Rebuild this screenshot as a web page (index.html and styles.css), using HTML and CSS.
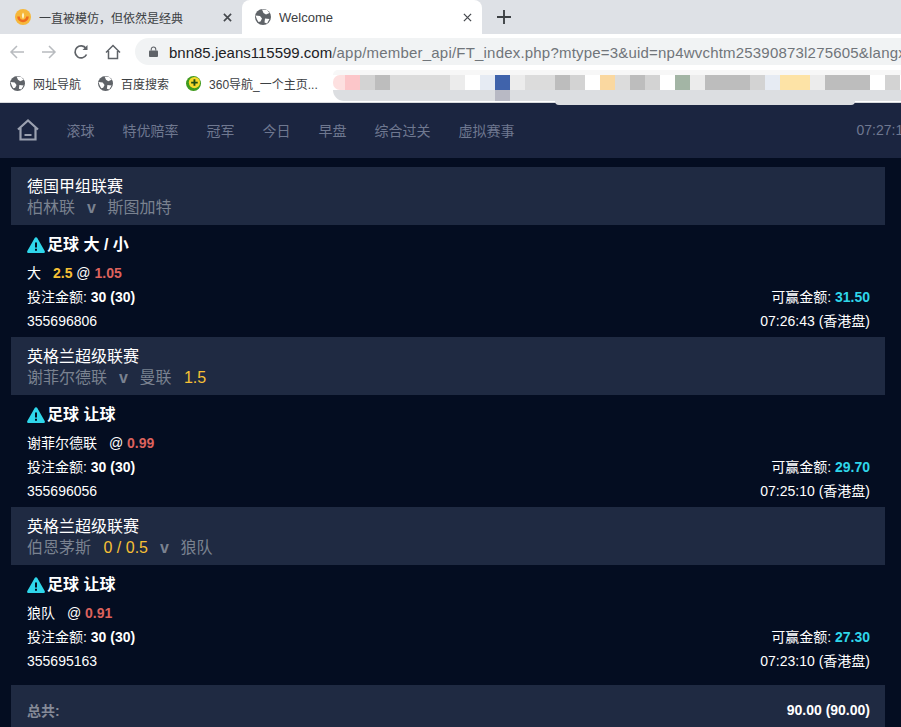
FILE: index.html
```html
<!DOCTYPE html>
<html lang="zh">
<head>
<meta charset="utf-8">
<title>Welcome</title>
<link rel="stylesheet" href="styles.css">
</head>
<body>
<div class="chrome">
  <div class="tabstrip">
    <div class="tab">
      <svg class="fav" viewBox="0 0 16 16"><circle cx="8" cy="8" r="8" fill="#f6b73a"/><path d="M3.500 7.500a4.500 4.500 0 0 0 9 0" fill="none" stroke="#ee6a1f" stroke-width="2.600"/><path d="M8 3.500c-1.500 2-1.500 4 0 6.500 1.500-2.500 1.500-4.500 0-6.500z" fill="#fff3c4"/></svg>
      <span class="tab-title">一直被模仿，但依然是经典</span>
      <svg class="close" viewBox="0 0 10 10"><path d="M1 1l8 8M9 1l-8 8" stroke="#45484d" stroke-width="1.800"/></svg>
    </div>
    <div class="tab tab-active">
      <svg class="fav" viewBox="0 0 16 16"><use href="#globe"/></svg>
      <span class="tab-title tab-title-latin">Welcome</span>
      <svg class="close" viewBox="0 0 10 10"><path d="M1 1l8 8M9 1l-8 8" stroke="#45484d" stroke-width="1.400"/></svg>
    </div>
    <svg class="newtab" viewBox="0 0 12 12"><path d="M6 0v12M0 6h12" stroke="#3c4043" stroke-width="1.600"/></svg>
  </div>
  <div class="toolbar">
    <svg class="tool" viewBox="0 0 16 16"><path d="M15 8H2M8 2L2 8l6 6" fill="none" stroke="#b8bbbf" stroke-width="1.500"/></svg>
    <svg class="tool" viewBox="0 0 16 16"><path d="M1 8h13M8 2l6 6-6 6" fill="none" stroke="#b8bbbf" stroke-width="1.500"/></svg>
    <svg class="tool" viewBox="0 0 16 16"><path d="M13.500 10.500A6 6 0 1 1 13 4.500" fill="none" stroke="#5f6368" stroke-width="1.700"/><path d="M14.500 1v5h-5z" fill="#5f6368"/></svg>
    <svg class="tool" viewBox="0 0 16 16"><path d="M1 8.500L8 1.500l7 7M3.500 7v7.500h9V7" fill="none" stroke="#5f6368" stroke-width="1.500"/></svg>
    <div class="address">
      <svg class="lock" viewBox="0 0 10 12"><path d="M2.500 5V3.500a2.500 2.500 0 0 1 5 0V5" fill="none" stroke="#5f6368" stroke-width="1.200"/><rect y="5" width="10" height="7" rx="1" fill="#5f6368"/></svg>
      <span class="url"><span class="host">bnn85.jeans115599.com</span><span class="path">/app/member_api/FT_index.php?mtype=3&amp;uid=np4wvchtm25390873l275605&amp;langx=zh-cn</span></span>
    </div>
  </div>
  <div class="bookmarks">
    <span class="mark"><svg class="mark-icon" viewBox="0 0 16 16"><use href="#globe"/></svg>网址导航</span>
    <span class="mark"><svg class="mark-icon" viewBox="0 0 16 16"><use href="#globe"/></svg>百度搜索</span>
    <span class="mark"><svg class="mark-icon" viewBox="0 0 16 16"><circle cx="8" cy="8" r="8" fill="#3f9a1e"/><circle cx="9" cy="7" r="6" fill="#f6d92c"/><path d="M9 3.500v7M5.500 7h7" stroke="#1f4d14" stroke-width="2"/></svg>360导航_一个主页...</span>
  </div>
  <div class="mosaic">
    <div class="mosaic-top"></div>
    <div class="mosaic-row">
      <i class="m first"></i><i class="m p"></i><i class="m c"></i><i class="m b"></i><i class="m d"></i><i class="m d"></i><i class="m d"></i><i class="m d"></i><i class="m a"></i><i class="m w"></i><i class="m e"></i><i class="m blue"></i><i class="m a"></i><i class="m d"></i><i class="m d"></i><i class="m b"></i><i class="m c"></i><i class="m w"></i><i class="m orange"></i><i class="m d"></i><i class="m b"></i><i class="m c"></i><i class="m w"></i><i class="m green"></i><i class="m a"></i><i class="m b"></i><i class="m b"></i><i class="m b"></i><i class="m c"></i><i class="m e"></i><i class="m yellow"></i><i class="m yellow"></i><i class="m a"></i><i class="m b"></i><i class="m b"></i><i class="m b"></i><i class="m w"></i><i class="m c"></i>
    </div>
    <div class="mosaic-low">
      <i class="low low-a"></i><i class="low low-blue"></i><i class="low low-a2"></i><i class="low low-b"></i><i class="low low-c"></i>
    </div>
  </div>
</div>

<nav class="topnav">
  <svg class="home" viewBox="0 0 22 22"><path d="M1 10.500L11 1.500l10 9M3.500 9v11.500h15V9M7.500 16h7" fill="none" stroke="#9ba1b0" stroke-width="2.200"/></svg>
  <a class="nav-link">滚球</a>
  <a class="nav-link">特优赔率</a>
  <a class="nav-link">冠军</a>
  <a class="nav-link">今日</a>
  <a class="nav-link">早盘</a>
  <a class="nav-link">综合过关</a>
  <a class="nav-link">虚拟赛事</a>
  <span class="clock">07:27:14</span>
</nav>

<main class="list">
  <section class="bet">
    <header class="league">
      <div class="league-name">德国甲组联赛</div>
      <div class="teams">柏林联<span class="vs">v</span>斯图加特</div>
    </header>
    <div class="detail">
      <h3 class="market"><svg class="warn" viewBox="0 0 18 16"><use href="#warning"/></svg>足球 大 / 小</h3>
      <div class="row"><span>大<b class="line">2.5</b> @ <b class="odds">1.05</b></span></div>
      <div class="row"><span>投注金额: <b>30 (30)</b></span><span>可赢金额: <b class="win">31.50</b></span></div>
      <div class="row"><span>355696806</span><span>07:26:43 (香港盘)</span></div>
    </div>
  </section>
  <section class="bet">
    <header class="league">
      <div class="league-name">英格兰超级联赛</div>
      <div class="teams">谢菲尔德联<span class="vs">v</span>曼联<span class="hcp">1.5</span></div>
    </header>
    <div class="detail">
      <h3 class="market"><svg class="warn" viewBox="0 0 18 16"><use href="#warning"/></svg>足球 让球</h3>
      <div class="row"><span>谢菲尔德联 <span class="at">@</span> <b class="odds">0.99</b></span></div>
      <div class="row"><span>投注金额: <b>30 (30)</b></span><span>可赢金额: <b class="win">29.70</b></span></div>
      <div class="row"><span>355696056</span><span>07:25:10 (香港盘)</span></div>
    </div>
  </section>
  <section class="bet">
    <header class="league">
      <div class="league-name">英格兰超级联赛</div>
      <div class="teams">伯恩茅斯<span class="hcp">0 / 0.5</span><span class="vs">v</span>狼队</div>
    </header>
    <div class="detail">
      <h3 class="market"><svg class="warn" viewBox="0 0 18 16"><use href="#warning"/></svg>足球 让球</h3>
      <div class="row"><span>狼队 <span class="at">@</span> <b class="odds">0.91</b></span></div>
      <div class="row"><span>投注金额: <b>30 (30)</b></span><span>可赢金额: <b class="win">27.30</b></span></div>
      <div class="row"><span>355695163</span><span>07:23:10 (香港盘)</span></div>
    </div>
  </section>
  <footer class="total"><b class="total-label">总共:</b><b>90.00 (90.00)</b></footer>
</main>

<svg class="defs" aria-hidden="true">
  <symbol id="globe" viewBox="0 0 16 16"><circle cx="8" cy="8" r="8" fill="#5f6368"/><path d="M0.500 6.500L5 7l2 2.500-1.500 3-2 .5-1.500-2.500zM7 0.500l5 .5 2.500 3L11 5.500 8.500 4zM10 9.500l4.500 .5-2.500 4.500-2.500-1z" fill="#fff"/></symbol>
  <symbol id="warning" viewBox="0 0 18 16"><path fill-rule="evenodd" d="M9 0.300c.6 0 1 .3 1.300 .8l7.400 12.900c.5 .9-.1 2-1.200 2H1.500C.4 16-.2 14.900 .3 14L7.700 1.100C8 .6 8.400 .3 9 .3zM8 5.500v5h2v-5zM8 11.800v2h2v-2z" fill="#2fd6ea"/></symbol>
</svg>
</body>
</html>
```
FILE: styles.css
```css
html, body { margin: 0; height: 727px; overflow: hidden; background: #040d21; }
body { font-family: "Liberation Sans", "Noto Sans CJK SC", sans-serif; font-size: 14px; color: #fff; position: relative; }

.chrome { background: #fff; color: #3c4043; }
.tabstrip { height: 34px; background: #dee1e6; display: flex; align-items: stretch; }
.tab { width: 242px; box-sizing: border-box; display: flex; align-items: center; padding: 0 10px 0 15px; font-size: 12px; }
.tab-active { background: #fff; border-radius: 8px 8px 0 0; width: 240px; padding-left: 13px; }
.fav { width: 16px; height: 16px; flex: none; margin-right: 8px; }
.tab-title { flex: 1; white-space: nowrap; overflow: hidden; }
.tab-title-latin { font-size: 13px; }
.close { width: 9px; height: 9px; flex: none; }
.newtab { width: 14px; height: 14px; margin: 10px 0 0 15px; }

.toolbar { height: 31px; display: flex; align-items: center; padding-left: 9px; }
.tool { width: 16px; height: 16px; margin: 4px 16px 0 0; flex: none; }
.toolbar .tool:nth-child(4) { margin-right: 14px; }
.address { flex: 1; min-width: 0; height: 27px; margin-top: 4px; border-radius: 14px 0 0 14px; background: #f1f3f4; display: flex; align-items: center; padding-left: 14px; overflow: hidden; }
.lock { width: 9px; height: 11px; flex: none; margin-right: 11px; }
.url { font-size: 15px; color: #70757a; white-space: nowrap; padding-top: 1px; }
.host { color: #202124; }
.path { letter-spacing: 0.2px; }

.bookmarks { height: 38px; box-sizing: border-box; display: flex; align-items: center; padding-left: 10px; font-size: 12px; border-bottom: 1px solid #d8dadd; }
.mark { display: flex; align-items: center; margin-right: 17px; }
.mark-icon { width: 15px; height: 15px; margin-right: 8px; }

.mosaic { position: absolute; left: 333px; top: 70px; width: 568px; height: 35px; overflow: hidden; z-index: 2; }
.mosaic-top { height: 5px; background: #f7f7f7; border-radius: 10px 0 0 0; }
.mosaic-row { display: flex; height: 15px; }
.m { flex: 0 0 15px; height: 15px; }
.m.first { flex-basis: 12px; background: #fde0e0; border-radius: 7px 0 0 7px; }
.m.a { background: #ececec; }
.m.b { background: #bdbdbd; }
.m.c { background: #d3d3d3; }
.m.d { background: #dcdcdc; }
.m.e { background: #e6ebf3; }
.m.w { background: #fff; }
.m.p { background: #fcc6c9; }
.m.blue { background: #4063ab; }
.m.orange { background: #fad8a0; }
.m.green { background: #a3b5a5; }
.m.yellow { background: #fde3a6; }
.mosaic-low { display: flex; align-items: flex-start; }
.low { display: block; height: 11px; background: #dcdee1; }
.low-a { width: 162px; border-radius: 0 0 0 11px; }
.low-blue { width: 15px; background: #b8b9c4; }
.low-a2 { width: 45px; }
.low-b { width: 300px; height: 15px; border-radius: 0 0 4px 4px; }
.low-c { width: 46px; }

.topnav { height: 55px; background: #1b2540; display: flex; align-items: center; padding-left: 17px; gap: 28px; white-space: nowrap; overflow: hidden; }
.home { width: 22px; height: 22px; flex: none; margin-right: -0.5px; margin-top: -1px; }
.nav-link, .clock { color: #6f7890; font-size: 14px; margin-top: -2px; }
.clock { margin-left: 314px; }

.list { padding: 9px 16px 0 11px; }
.league { background: #1f2a42; padding: 9px 16px 7px; height: 58px; box-sizing: border-box; }
.league-name { font-size: 16px; line-height: 21px; color: #fff; }
.teams { font-size: 16px; line-height: 21px; color: #7a8290; }
.vs { margin: 0 11.5px 0 12px; font-weight: 700; }
.hcp { color: #f7c035; margin-left: 12.5px; }
.detail { padding: 9px 15px 3px 16px; height: 112px; box-sizing: border-box; }
.market { margin: 0 0 5px; height: 22px; font-size: 16px; line-height: 22px; font-weight: 700; display: flex; align-items: center; }
.warn { width: 18px; height: 16px; margin-right: 2px; margin-top: -1px; }
.row { display: flex; justify-content: space-between; line-height: 24px; height: 24px; font-size: 14px; white-space: nowrap; }
.line { color: #f7c035; margin-left: 12px; }
.odds { color: #dc625d; }
.win { color: #2fd6ea; }
.at { margin-left: 8px; }
.total { margin-top: 8px; background: #1f2a42; height: 50px; display: flex; justify-content: space-between; align-items: center; padding: 0 15px 0 16px; }
.total-label { color: #858b98; }
.defs { position: absolute; width: 0; height: 0; }
```
